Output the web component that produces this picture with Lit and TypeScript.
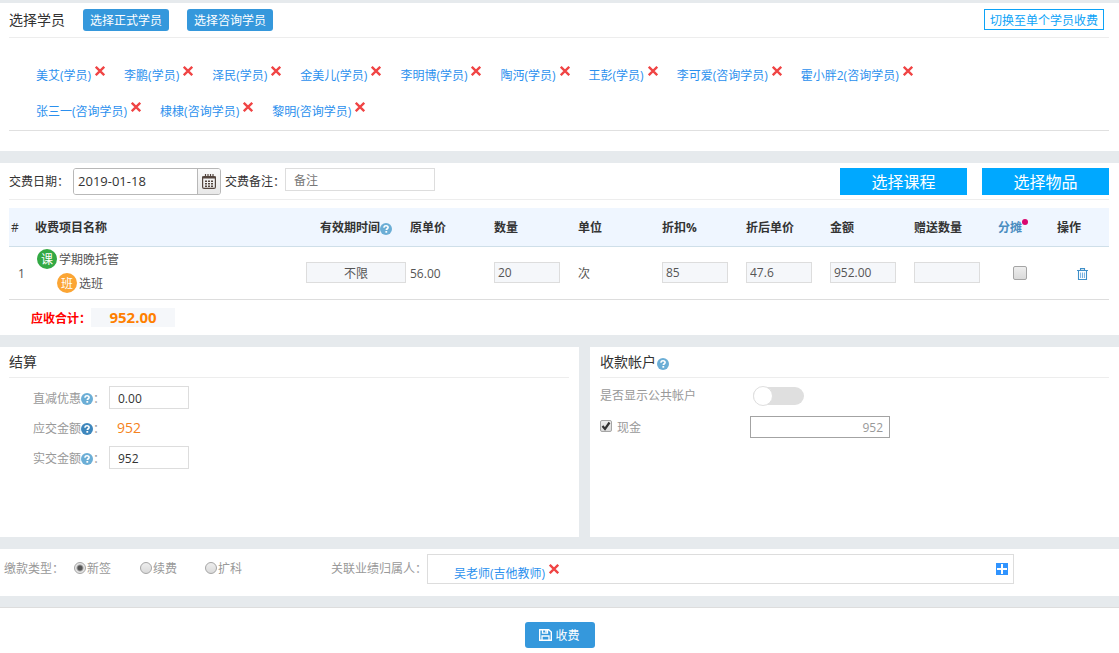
import { LitElement, html, css, svg } from "lit";
import { customElement, property } from "lit/decorators.js";

const base = css`
  *,
  *::before,
  *::after {
    box-sizing: border-box;
  }
  button,
  input {
    font: inherit;
    color: inherit;
    margin: 0;
    border-radius: 0;
  }
  button {
    border: 0;
    padding: 0;
    background: none;
    cursor: pointer;
  }
  a {
    color: inherit;
    text-decoration: none;
  }
  svg {
    display: block;
  }
`;

@customElement("help-mark")
class HelpMark extends LitElement {
  static styles = css`
    :host {
      display: inline-block;
      width: 12px;
      height: 12px;
      vertical-align: -3px;
      color: #6baed6;
    }
    :host([strong]) {
      color: #3d87bd;
    }
    svg {
      display: block;
    }
  `;
  render() {
    return html`<svg width="12" height="12" viewBox="0 0 12 12" aria-hidden="true">
      <circle cx="6" cy="6" r="6" fill="currentColor" />
      <path d="M4 4.7C4 3.3 4.9 2.8 6 2.8s2.1.6 2.1 1.7c0 1.2-1.8 1.3-1.8 2.6" fill="none" stroke="#fff" stroke-width="1.6" />
      <rect x="5.4" y="8" width="1.8" height="1.7" fill="#fff" />
    </svg>`;
  }
}

@customElement("name-tag")
class NameTag extends LitElement {
  @property() label = "";
  static styles = [
    base,
    css`
      :host {
        display: flex;
        align-items: center;
        gap: 4px;
        height: 36px;
        color: #2b90ee;
        white-space: nowrap;
      }
      a {
        padding-top: 2px;
      }
      .remove {
        width: 10px;
        height: 10px;
        margin-bottom: 8px;
      }
    `,
  ];
  render() {
    return html`<a href="#">${this.label}</a
      ><button class="remove" aria-label="移除 ${this.label}">
        <svg width="10" height="10" viewBox="0 0 10 10">
          <path d="M.8.8l8.400 8.400M9.200.8L.8 9.200" stroke="#f04444" stroke-width="2.300" />
        </svg>
      </button>`;
  }
}

const calendarIcon = svg`<svg width="14" height="15" viewBox="0 0 14 15" fill="none" stroke="#54463f">
  <rect x=".6" y="2.6" width="12.8" height="11.8" rx="1.5" stroke-width="1.2"/>
  <path d="M0 3.500h14" stroke-width="2.200"/>
  <path d="M3.500 0v4M6 0v4M8.500 0v4M11 0v4" stroke-width="1.200"/>
  <path d="M3 7.200h2M6 7.200h2M9 7.200h2M3 9.700h2M6 9.700h2M9 9.700h2M3 12.200h2M6 12.200h2M9 12.200h2" stroke-width="1.500"/>
</svg>`;

const trashIcon = svg`<svg width="11" height="12" viewBox="0 0 11 12" fill="none" stroke="#3f8fc8">
  <path d="M0 2.500h11M3.500 2.300V.6h4v1.700M1.500 2.500v9h8v-9" stroke-width="1.100"/>
  <path d="M3.600 4.500v5.500M5.500 4.500v5.500M7.400 4.500v5.500" stroke="#72afe0"/>
</svg>`;

const saveIcon = svg`<svg width="13" height="12" viewBox="0 0 13 12" fill="none" stroke="#fff">
  <path d="M.700.700h9l2.600 2.400v8.200H.700z" stroke-width="1.400"/>
  <path d="M3.500 1v3.200h5V1M3 11V7h7v4" stroke-width="1.300"/>
  <path d="M7 1v2.500" stroke-width="1.500"/>
</svg>`;

const students = [
  "美艾(学员)",
  "李鹏(学员)",
  "泽民(学员)",
  "金美儿(学员)",
  "李明博(学员)",
  "陶沔(学员)",
  "王彭(学员)",
  "李可爱(咨询学员)",
  "霍小胖2(咨询学员)",
  "张三一(咨询学员)",
  "棣棣(咨询学员)",
  "黎明(咨询学员)",
];

@customElement("app-root")
class AppRoot extends LitElement {
  static styles = [
    base,
    css`
      :host {
        display: flex;
        flex-direction: column;
        gap: 12px;
        min-height: 100vh;
        padding-top: 3px;
        background: #e6eaed;
        color: #333;
        font: 12px/18px "Open Sans", "Noto Sans CJK SC", sans-serif;
      }
      .panel {
        background: #fff;
        padding: 0 10px 0 9px;
      }
      .head {
        display: flex;
        align-items: center;
        height: 35px;
        border-bottom: 1px solid #ededed;
      }
      .title {
        margin: 0;
        font-size: 14px;
        line-height: 20px;
        font-weight: 400;
      }
      .pick {
        width: 86px;
        height: 22px;
        margin-left: 18px;
        padding-top: 2px;
        border-radius: 3px;
        background: #3598dc;
        color: #fff;
      }
      .switch-mode {
        width: 120px;
        height: 21px;
        margin: 0 5px 2px auto;
        border: 1px solid #0ca3f7;
        padding-top: 2px;
        color: #0ca3f7;
        line-height: 17px;
      }
      .students {
        padding-bottom: 20px;
      }
      .tags {
        display: flex;
        flex-wrap: wrap;
        column-gap: 19px;
        padding: 19px 100px 1px 27px;
        border-bottom: 1px solid #e0e0e0;
      }

      .toolbar {
        display: flex;
        align-items: flex-start;
        height: 37px;
        padding-top: 5px;
        border-bottom: 1px solid #ededed;
      }
      .toolbar label {
        line-height: 28px;
      }
      .date {
        display: flex;
        width: 148px;
        height: 27px;
        margin: 0 4px;
        border: 1px solid #b8b8b8;
        border-radius: 3px;
        overflow: hidden;
      }
      .date input {
        flex: 1;
        min-width: 0;
        border: 0;
        padding: 0 4px 2px;
        font-size: 13px;
      }
      .date button {
        display: grid;
        place-items: center;
        width: 23px;
        border-left: 1px solid #b8b8b8;
        background: linear-gradient(#fafafa, #e8e8e8);
      }
      .box {
        height: 23px;
        border: 1px solid #ddd;
        padding: 2px 8px 0;
        background: #fff;
      }
      .note {
        width: 150px;
      }
      .note::placeholder {
        color: #777;
      }
      .add {
        width: 127px;
        height: 27px;
        margin-left: 15px;
        background: #00a8ff;
        color: #fff;
        font-size: 16px;
      }
      .push {
        margin-left: auto;
      }

      .items {
        width: 100%;
        margin-top: 8px;
        table-layout: fixed;
        border-spacing: 0;
      }
      th,
      td {
        padding: 2px 0 0;
        text-align: left;
      }
      th {
        height: 39px;
        background: #eff6ff;
        border-bottom: 1px solid #cfdfe9;
        white-space: nowrap;
      }
      td {
        height: 53px;
        border-bottom: 1px solid #ddd;
        color: #555;
      }
      .c-no {
        width: 26px;
      }
      .c-valid {
        width: 104px;
      }
      .c-num {
        width: 84px;
      }
      .c-share {
        width: 59px;
      }
      .c-act {
        width: 52px;
      }
      th.no {
        padding-left: 2px;
        font-weight: 400;
      }
      td.no {
        padding-left: 9px;
      }
      .centered {
        padding-right: 4px;
        text-align: center;
      }
      td.course {
        padding: 0 0 4px 2px;
      }
      .line {
        display: flex;
        align-items: center;
        gap: 2px;
        height: 24px;
      }
      .label {
        padding-top: 2px;
      }
      .sub {
        padding-left: 20px;
      }
      .badge {
        width: 20px;
        height: 20px;
        border-radius: 50%;
        background: #33a944;
        color: #fff;
        line-height: 22px;
        text-align: center;
      }
      .sub .badge {
        background: #fba534;
      }
      .cell {
        display: block;
        width: 66px;
        height: 21px;
        margin-bottom: 3px;
        border: 1px solid #ddd;
        padding: 0 3px;
        background: #f5f7fa;
        color: #555;
      }
      .centered .cell {
        width: 100px;
        text-align: center;
      }
      .share {
        display: inline-flex;
        color: #4a8dc0;
      }
      .share::after {
        content: "";
        width: 6px;
        height: 6px;
        border-radius: 50%;
        background: #d9076f;
      }
      .check,
      .radio {
        display: block;
        flex: none;
        appearance: none;
        width: 12px;
        height: 12px;
        border: 1px solid #a5a5a5;
        border-radius: 2px;
        background: linear-gradient(#eee, #dadada);
      }
      .radio {
        margin-bottom: 3px;
        border-radius: 50%;
      }
      .radio:checked {
        background: radial-gradient(#555 0 2px, #e6e6e6 4px);
      }
      .big {
        width: 14px;
        height: 14px;
        margin: 0 0 2px 15px;
      }
      .trash {
        display: block;
        margin-left: 20px;
      }
      .total {
        display: flex;
        align-items: center;
        height: 35px;
        padding-left: 22px;
        color: #f00;
        font-weight: 700;
      }
      .sum {
        width: 84px;
        height: 19px;
        background: #f5f7fa;
        color: #ff7f00;
        font-size: 15px;
        line-height: 19px;
        text-align: center;
      }

      .split {
        display: grid;
        grid-template-columns: 579fr 529fr;
        gap: 11px;
      }
      .split .panel {
        min-height: 190px;
        padding-left: 10px;
      }
      .split .panel:first-child {
        padding-left: 9px;
      }
      .split .head {
        height: 31px;
        gap: 1px;
      }
      .head help-mark {
        margin-top: 4px;
      }
      .form {
        display: grid;
        grid-template-columns: 76px 80px;
        grid-template-rows: 23px 23px 23px;
        row-gap: 7px;
        align-items: center;
        padding: 8px 0 0 24px;
        color: #999;
      }
      .form label,
      .form .name {
        display: flex;
        align-items: center;
        padding-top: 2px;
      }
      .form .box {
        width: 80px;
        color: #333;
      }
      .due {
        padding-left: 8px;
        color: #f58220;
        font-size: 14px;
      }
      .accounts {
        display: grid;
        grid-template-columns: 150px 140px;
        grid-template-rows: 20px 22px;
        row-gap: 10px;
        align-items: center;
        padding-top: 8px;
        color: #999;
      }
      .toggle {
        appearance: none;
        display: flex;
        align-items: center;
        width: 51px;
        height: 18px;
        margin-left: 3px;
        border-radius: 9px;
        background: #dfdfdf;
      }
      .toggle::before {
        content: "";
        width: 20px;
        height: 20px;
        flex: none;
        border: 1px solid #dfdfdf;
        border-radius: 50%;
        background: #fff;
      }
      .cash {
        display: flex;
        align-items: center;
        gap: 5px;
      }
      .mark {
        display: grid;
        margin-bottom: 3px;
      }
      .mark > * {
        grid-area: 1 / 1;
      }
      .mark svg {
        pointer-events: none;
      }
      .amount {
        width: 140px;
        height: 22px;
        border: 1px solid #a3a3a3;
        padding: 0 6px;
        background: #fff;
        color: #999;
        text-align: right;
      }

      .extra {
        display: flex;
        align-items: flex-start;
        height: 47px;
        padding: 5px 105px 0 4px;
        color: #999;
        white-space: nowrap;
      }
      .extra .text {
        line-height: 30px;
      }
      .radios {
        display: grid;
        grid-template-columns: 66px 65px 126px;
        margin-left: 10px;
      }
      .radios label {
        display: flex;
        align-items: center;
        gap: 1px;
        line-height: 30px;
      }
      .owner {
        display: flex;
        flex: 1;
        align-items: center;
        justify-content: space-between;
        height: 30px;
        border: 1px solid #ddd;
        padding: 0 5px 0 26px;
      }
      .owner name-tag {
        padding-top: 8px;
      }
      .foot {
        flex: 1;
        margin-top: -1px;
        padding: 14px 0 5px;
        border-top: 1px solid #ddd;
        background: #fff;
      }
      .submit {
        display: flex;
        align-items: center;
        justify-content: center;
        gap: 3px;
        width: 70px;
        height: 26px;
        margin: 0 auto;
        border-radius: 3px;
        background: #3598dc;
        color: #fff;
      }
    `,
  ];

  render() {
    return html`
      <section class="panel students">
        <div class="head">
          <h2 class="title">选择学员</h2>
          <button class="pick">选择正式学员</button>
          <button class="pick">选择咨询学员</button>
          <button class="switch-mode">切换至单个学员收费</button>
        </div>
        <div class="tags">${students.map((s) => html`<name-tag label=${s}></name-tag>`)}</div>
      </section>

      <section class="panel">
        <div class="toolbar">
          <label for="date">交费日期：</label>
          <div class="date">
            <input id="date" type="text" value="2019-01-18" />
            <button aria-label="选择日期">${calendarIcon}</button>
          </div>
          <label for="note">交费备注：</label>
          <input id="note" class="box note" type="text" placeholder="备注" />
          <button class="add push">选择课程</button>
          <button class="add">选择物品</button>
        </div>
        <table class="items">
          <colgroup>
            <col class="c-no" />
            <col />
            <col class="c-valid" />
            ${[1, 2, 3, 4, 5, 6, 7].map(() => html`<col class="c-num" />`)}
            <col class="c-share" />
            <col class="c-act" />
          </colgroup>
          <thead>
            <tr>
              <th class="no">#</th>
              <th>收费项目名称</th>
              <th class="centered">有效期时间<help-mark></help-mark></th>
              ${["原单价", "数量", "单位", "折扣%", "折后单价", "金额", "赠送数量"].map((t) => html`<th>${t}</th>`)}
              <th><a class="share" href="#">分摊</a></th>
              <th>操作</th>
            </tr>
          </thead>
          <tbody>
            <tr>
              <td class="no">1</td>
              <td class="course">
                <div class="line"><span class="badge">课</span><span class="label">学期晚托管</span></div>
                <div class="line sub"><span class="badge">班</span><a class="label" href="#">选班</a></div>
              </td>
              <td class="centered"><input class="cell" aria-label="有效期时间" value="不限" /></td>
              <td>56.00</td>
              <td><input class="cell" aria-label="数量" value="20" /></td>
              <td>次</td>
              <td><input class="cell" aria-label="折扣%" value="85" /></td>
              <td><input class="cell" aria-label="折后单价" value="47.6" /></td>
              <td><input class="cell" aria-label="金额" value="952.00" /></td>
              <td><input class="cell" aria-label="赠送数量" /></td>
              <td><input class="check big" type="checkbox" aria-label="分摊" /></td>
              <td><button class="trash" aria-label="删除">${trashIcon}</button></td>
            </tr>
          </tbody>
        </table>
        <div class="total"><span class="label">应收合计：</span><span class="sum">952.00</span></div>
      </section>

      <div class="split">
        <section class="panel">
          <div class="head"><h2 class="title">结算</h2></div>
          <div class="form">
            <label for="off">直减优惠<help-mark></help-mark>：</label>
            <input id="off" class="box" value="0.00" />
            <span class="name">应交金额<help-mark strong></help-mark>：</span>
            <span class="due">952</span>
            <label for="paid">实交金额<help-mark></help-mark>：</label>
            <input id="paid" class="box" value="952" />
          </div>
        </section>
        <section class="panel">
          <div class="head"><h2 class="title">收款帐户</h2><help-mark></help-mark></div>
          <div class="accounts">
            <label for="public">是否显示公共帐户</label>
            <input id="public" class="toggle" type="checkbox" role="switch" />
            <label class="cash"
              ><span class="mark"
                ><input class="check" type="checkbox" checked /><svg width="12" height="12" viewBox="0 0 12 12">
                  <path d="M2.500 6l2.500 3 4.500-6.500" fill="none" stroke="#333" stroke-width="2.200" /></svg></span
              ><span class="label">现金</span></label
            >
            <input class="amount" aria-label="现金金额" value="952" />
          </div>
        </section>
      </div>

      <section class="panel extra">
        <span class="text">缴款类型：</span>
        <div class="radios" role="radiogroup" aria-label="缴款类型">
          <label><input class="radio" type="radio" name="kind" checked />新签</label>
          <label><input class="radio" type="radio" name="kind" />续费</label>
          <label><input class="radio" type="radio" name="kind" />扩科</label>
        </div>
        <span class="text">关联业绩归属人：</span>
        <div class="owner">
          <name-tag label="吴老师(吉他教师)"></name-tag>
          <button aria-label="添加归属人">
            <svg width="12" height="12" viewBox="0 0 12 12">
              <rect width="12" height="12" fill="#3094ff" />
              <path d="M6 1v10M1 6h10" stroke="#fff" stroke-width="2" />
            </svg>
          </button>
        </div>
      </section>

      <footer class="foot">
        <button class="submit">${saveIcon}<span class="label">收费</span></button>
      </footer>
    `;
  }
}
